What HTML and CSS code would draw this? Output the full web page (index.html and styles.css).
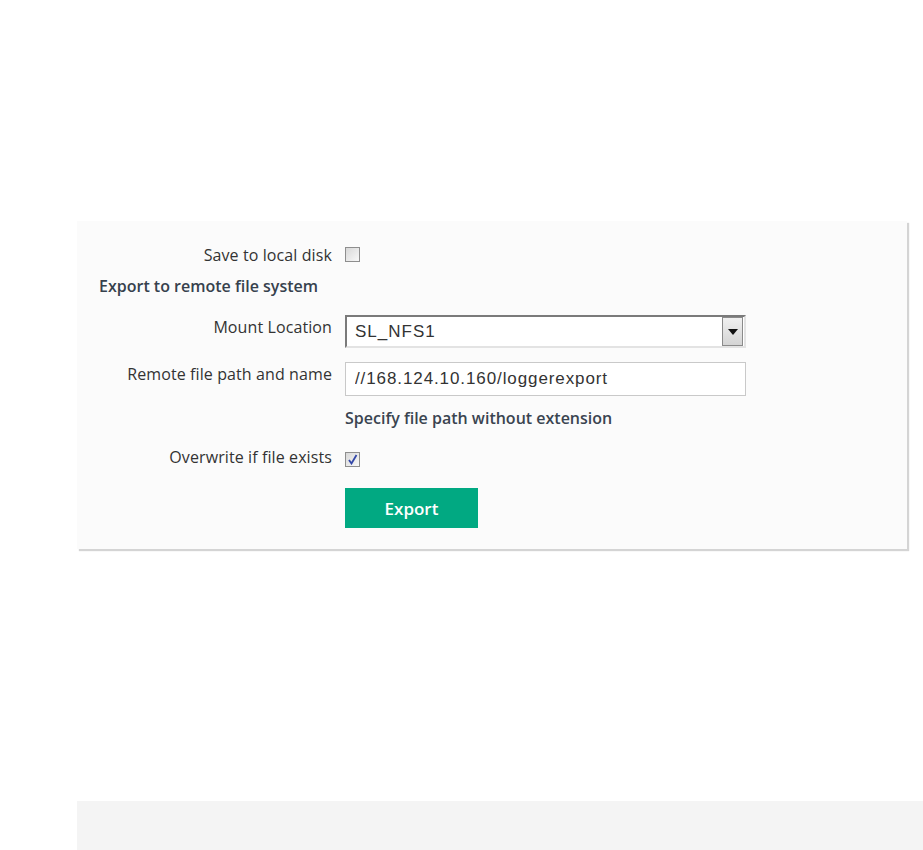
FILE: index.html
```html
<!DOCTYPE html>
<html lang="en">
<head>
    <meta charset="UTF-8">
    <title>Export</title>
    <link rel="stylesheet" href="styles.css">
</head>
<body>

    <form class="panel" id="exportForm">
        <!-- Local disk -->
        <div class="row row-local">
            <label class="label" for="localDisk">Save to local disk</label>
            <span class="check" id="localDisk"></span>
        </div>

        <h4 class="section-title">Export to remote file system</h4>

        <!-- Mount location -->
        <div class="row row-mount">
            <label class="label" for="mount">Mount Location</label>
            <div class="select-wrap">
                <select id="mount" name="mount">
                    <option>SL_NFS1</option>
                </select>
                <span class="select-arrow">
                    <svg width="10" height="6" viewBox="0 0 10 6"><path d="M0 0H10L5 6Z" fill="#111"/></svg>
                </span>
            </div>
        </div>

        <!-- Remote path -->
        <div class="row row-path">
            <label class="label" for="path">Remote file path and name</label>
            <input type="text" id="path" name="path" value="//168.124.10.160/loggerexport">
        </div>
        <p class="hint">Specify file path without extension</p>

        <!-- Overwrite -->
        <div class="row row-overwrite">
            <label class="label" for="overwrite">Overwrite if file exists</label>
            <span class="check checked" id="overwrite">
                <svg width="11" height="11" viewBox="0 0 11 11"><path d="M2 6L4.5 9.5L9.5 1" fill="none" stroke="#3347a8" stroke-width="1.8"/></svg>
            </span>
        </div>

        <div class="actions">
            <button type="button">Export</button>
        </div>
    </form>

    <div class="footer-bar"></div>

</body>
</html>
```

FILE: styles.css
```css
body {
    margin: 0;
    font-family: "Open Sans", sans-serif;
    font-size: 16px;
    color: #333;
    background: #fff;
}
.panel {
    margin: 221px 0 0 77px;
    width: 830px;
    height: 328px;
    box-sizing: border-box;
    padding: 24px 0 0 0;
    background: #fbfbfb;
    box-shadow: 2px 2px 1px #d4d4d4;
}
.row {
    display: flex;
    align-items: flex-start;
    gap: 13px;
}
.label {
    width: 255px;
    flex: none;
    text-align: right;
    line-height: 20px;
    letter-spacing: 0.1px;
}
.check {
    width: 13px;
    height: 13px;
    margin-top: 2px;
    border: 1px solid #8e8e8e;
    background: linear-gradient(135deg, #d8d8d8, #f8f8f8);
    display: flex;
    align-items: center;
    justify-content: center;
}
.section-title {
    margin: 11px 0 0 22px;
    font-size: 16px;
    font-weight: 600;
    line-height: 20px;
    color: #36414d;
}
.row-mount {
    margin-top: 19px;
}
.row-mount .label,
.row-path .label {
    padding-top: 2px;
}
.select-wrap {
    position: relative;
    width: 401px;
    height: 33px;
}
select {
    width: 100%;
    height: 100%;
    box-sizing: border-box;
    appearance: none;
    -webkit-appearance: none;
    border: 2px solid #7a7a7a;
    border-right-color: #e3e3e3;
    border-bottom-color: #e3e3e3;
    border-radius: 0;
    background: #fff;
    padding: 0 8px;
    font-family: "Liberation Sans", Arial, sans-serif;
    font-size: 17px;
    letter-spacing: 1px;
    color: #333;
}
.select-arrow {
    position: absolute;
    top: 2px;
    right: 3px;
    width: 19px;
    height: 27px;
    border: 1px solid #8a8a8a;
    background: linear-gradient(#f0f0f0, #d4d4d4);
    display: flex;
    align-items: center;
    justify-content: center;
}
.row-path {
    margin-top: 14px;
}
input[type="text"] {
    width: 401px;
    height: 34px;
    box-sizing: border-box;
    border: 1px solid #c9c9c9;
    padding: 0 9px;
    margin: 0;
    font-family: "Liberation Sans", Arial, sans-serif;
    font-size: 17px;
    letter-spacing: 0.9px;
    color: #333;
    background: #fff;
}
.hint {
    margin: 12px 0 0 268px;
    line-height: 20px;
    font-weight: 600;
    color: #3a4450;
}
.row-overwrite {
    margin-top: 19px;
}
.row-overwrite .check {
    margin-top: 5px;
}
.actions {
    margin: 21px 0 0 268px;
}
button {
    width: 133px;
    height: 40px;
    border: none;
    border-radius: 0;
    background: #01a982;
    color: #fff;
    font-family: "Open Sans", sans-serif;
    font-size: 17px;
    font-weight: 600;
    cursor: pointer;
}
.footer-bar {
    margin: 252px 0 0 77px;
    height: 60px;
    background: #f4f4f4;
}
```
